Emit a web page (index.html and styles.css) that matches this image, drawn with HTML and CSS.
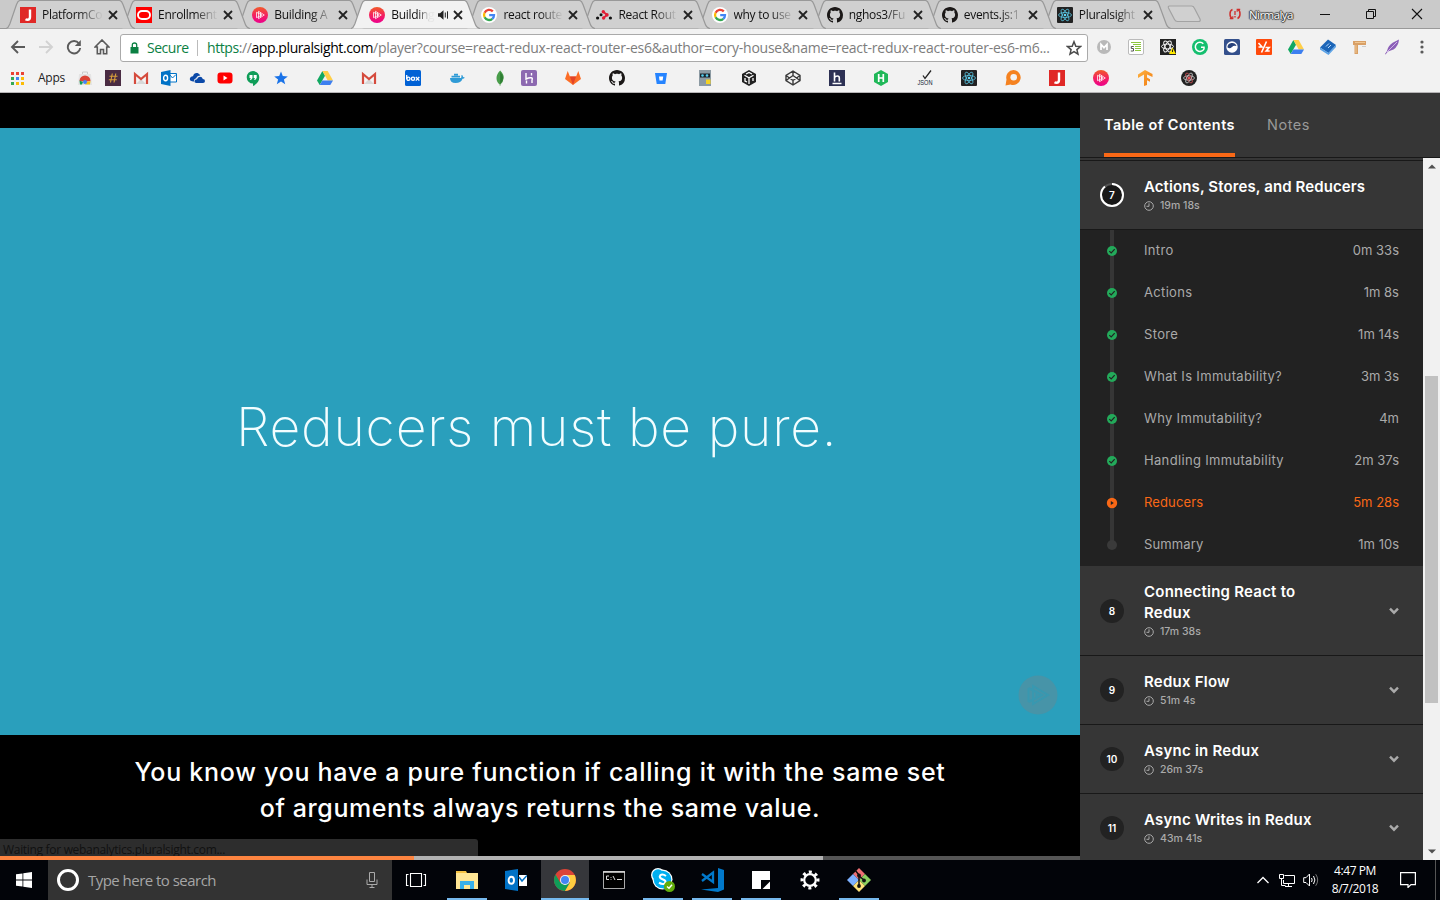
FILE: index.html
```html
<!DOCTYPE html>
<html lang="en">
<head>
<meta charset="utf-8">
<title>Building Applications with React and Redux</title>
<link rel="stylesheet" href="styles.css">
</head>
<body>
<svg class="defs" aria-hidden="true">
  <defs>
    <linearGradient id="pinkGrad" x1="0" y1="0" x2="0" y2="1"><stop offset="0" stop-color="#f15b2a"/><stop offset=".5" stop-color="#f4235f"/><stop offset="1" stop-color="#ec008c"/></linearGradient>
    <linearGradient id="tfGrad" x1="0" y1="0" x2="1" y2="1"><stop offset="0" stop-color="#ffb340"/><stop offset="1" stop-color="#f07a10"/></linearGradient>
    <symbol id="tabshape" viewBox="0 0 129 29"><path d="M0 28.5C2.500 28 3 26 4 23.500L10.500 4.500Q12 .5 14 .5H113.500Q115.500 .5 117 4.500L124 23.500Q125.500 28 129 28.500" stroke="#999" stroke-width="1.200"/></symbol>
    <symbol id="close" viewBox="0 0 10 10"><path d="M1 1L9 9M9 1L1 9" stroke="#222" stroke-width="1.800" fill="none"/></symbol>
    <symbol id="jred" viewBox="0 0 16 16"><path fill="#e02826" d="M0 0h16v16H0z"/><path d="M10 2.500v7.500q0 2.700-2.600 2.700-1 0-1.900-.5" fill="none" stroke="#fff" stroke-width="2.400"/></symbol>
    <symbol id="oracle" viewBox="0 0 16 16"><path fill="#f00" d="M0 0h16v16H0z"/><rect x="2" y="4" width="12" height="8" rx="4" fill="none" stroke="#fff" stroke-width="1.900"/></symbol>
    <symbol id="plural" viewBox="0 0 16 16"><circle cx="8" cy="8" r="8" fill="url(#pinkGrad)"/><path d="M6.500 4.300v7.400L12.300 8zM4.500 5.300v5.400M4.500 5.300L10 8l-5.500 2.700M8.500 5.500v5" fill="none" stroke="#fff" stroke-width=".9" opacity=".85"/></symbol>
    <symbol id="google" viewBox="0 0 16 16"><circle cx="8" cy="8" r="8" fill="#fff"/><g fill="none" stroke-width="2.300"><path d="M11.800 4.400A5 5 0 0 0 3.600 5.700" stroke="#ea4335"/><path d="M3.600 5.700A5 5 0 0 0 3.600 10.300" stroke="#fbbc05"/><path d="M3.600 10.300A5 5 0 0 0 11.300 11.800" stroke="#34a853"/><path d="M11.300 11.800Q13 10.300 13 8.200H8.200" stroke="#4285f4"/></g></symbol>
    <symbol id="rrouter" viewBox="0 0 16 16"><g fill="#111"><circle cx="1.600" cy="11" r="1.600"/><circle cx="5" cy="7.800" r="1.500"/><circle cx="14.400" cy="11" r="1.600"/></g><g fill="#e11d34"><circle cx="7.300" cy="4.800" r="1.700"/><circle cx="10.900" cy="7.900" r="1.800"/><circle cx="7.600" cy="11" r="1.700"/></g><path d="M7.300 4.800l3.600 3.100-3.300 3.100" fill="none" stroke="#e11d34" stroke-width="1.800"/></symbol>
    <symbol id="github" viewBox="0 0 16 16"><path fill="#1b1817" d="M8 0C3.580 0 0 3.580 0 8c0 3.540 2.290 6.530 5.470 7.590.4.070.55-.17.55-.38 0-.19-.010-.82-.010-1.490-2.010.37-2.530-.49-2.690-.94-.09-.23-.48-.94-.82-1.130-.28-.15-.68-.52-.010-.53.63-.010 1.080.58 1.230.82.72 1.210 1.870.87 2.330.66.070-.52.28-.87.51-1.070-1.780-.2-3.640-.89-3.640-3.950 0-.87.31-1.590.82-2.150-.080-.2-.36-1.020.080-2.120 0 0 .67-.21 2.200.82.64-.18 1.320-.27 2-.27s1.360.09 2 .27c1.530-1.040 2.200-.82 2.200-.82.44 1.100.16 1.920.080 2.120.51.56.82 1.270.82 2.150 0 3.070-1.870 3.750-3.650 3.950.29.25.54.73.54 1.480 0 1.070-.010 1.930-.010 2.200 0 .21.15.46.55.38A8.010 8.010 0 0 0 16 8c0-4.420-3.580-8-8-8z"/></symbol>
    <symbol id="react" viewBox="0 0 16 16"><rect width="16" height="16" rx="1" fill="#222"/><g fill="none" stroke="#5ed3f3" stroke-width=".7"><ellipse cx="8" cy="8" rx="6.500" ry="2.500"/><ellipse cx="8" cy="8" rx="6.500" ry="2.500" transform="rotate(60 8 8)"/><ellipse cx="8" cy="8" rx="6.500" ry="2.500" transform="rotate(120 8 8)"/></g><circle cx="8" cy="8" r="1.300" fill="#5ed3f3"/></symbol>
    <symbol id="gmail" viewBox="0 0 16 16"><path fill="#f4f4f4" d="M1 3h14v11H1z"/><path fill="#d8d8d8" d="M3 14l5-5 5 5z"/><path d="M2 14V4l6 5 6-5v10" fill="none" stroke="#d54b3d" stroke-width="2.200"/></symbol>
    <symbol id="gdrive" viewBox="0 0 16 16"><path fill="#11a861" d="M5.400 1L0 10.400 2.700 15 8 5.700z"/><path fill="#ffcf48" d="M5.400 1h5.300L16 10.400h-5.300z"/><path fill="#3d7ff0" d="M5.400 10.400H16L13.300 15H2.700z"/></symbol>
    <symbol id="outlook" viewBox="0 0 16 16"><path fill="#fff" stroke="#0072c6" d="M8 3.500h7.500v8.500H8z"/><path d="M9 5l2.500 3L15 4.500" fill="none" stroke="#0072c6"/><path fill="#0072c6" d="M0 2l9.500-2v16L0 14z"/><ellipse cx="4.600" cy="8" rx="2" ry="2.700" fill="none" stroke="#fff" stroke-width="1.400"/></symbol>
    <symbol id="clock" viewBox="0 0 10 10"><circle cx="5" cy="5" r="4.300" fill="none" stroke="#aaa"/><path d="M5 2.300V5.300H2.500" fill="none" stroke="#aaa"/></symbol>
    <symbol id="chev" viewBox="0 0 10 8"><path d="M1 1.700L5 5.700L9 1.700" fill="none" stroke="#aaa" stroke-width="2.400"/></symbol>
    <symbol id="done" viewBox="0 0 10 10"><circle cx="5" cy="5" r="5" fill="#23aa5a"/><path d="M2.300 5.100l1.900 1.800 3.500-3.700" fill="none" stroke="#222" stroke-width="1.200"/></symbol>
  </defs>
</svg>

<header class="tabstrip">
  <div class="tabs">
    <div class="tab first"><svg class="shape"><use href="#tabshape"/></svg><svg class="fav"><use href="#jred"/></svg><span class="label">PlatformCo</span><svg class="x"><use href="#close"/></svg></div>
    <div class="tab"><svg class="shape"><use href="#tabshape"/></svg><svg class="fav"><use href="#oracle"/></svg><span class="label">Enrollment</span><svg class="x"><use href="#close"/></svg></div>
    <div class="tab third"><svg class="shape"><use href="#tabshape"/></svg><svg class="fav"><use href="#plural"/></svg><span class="label">Building A</span><svg class="x"><use href="#close"/></svg></div>
    <div class="tab active"><svg class="shape"><use href="#tabshape"/></svg><svg class="fav"><use href="#plural"/></svg><span class="label">Building</span><svg class="audio" viewBox="0 0 12 10"><path fill="#222" d="M0 3.200h2L5.500.3v9.400L2 6.800H0z"/><path d="M7.300 2.500v5M9.500 1.300v7.400" stroke="#222" fill="none"/></svg><svg class="x"><use href="#close"/></svg></div>
    <div class="tab"><svg class="shape"><use href="#tabshape"/></svg><svg class="fav"><use href="#google"/></svg><span class="label">react route</span><svg class="x"><use href="#close"/></svg></div>
    <div class="tab"><svg class="shape"><use href="#tabshape"/></svg><svg class="fav"><use href="#rrouter"/></svg><span class="label">React Rout</span><svg class="x"><use href="#close"/></svg></div>
    <div class="tab"><svg class="shape"><use href="#tabshape"/></svg><svg class="fav"><use href="#google"/></svg><span class="label">why to use</span><svg class="x"><use href="#close"/></svg></div>
    <div class="tab"><svg class="shape"><use href="#tabshape"/></svg><svg class="fav"><use href="#github"/></svg><span class="label">nghos3/Fu</span><svg class="x"><use href="#close"/></svg></div>
    <div class="tab"><svg class="shape"><use href="#tabshape"/></svg><svg class="fav"><use href="#github"/></svg><span class="label">events.js:1</span><svg class="x"><use href="#close"/></svg></div>
    <div class="tab"><svg class="shape"><use href="#tabshape"/></svg><svg class="fav"><use href="#react"/></svg><span class="label">Pluralsight</span><svg class="x"><use href="#close"/></svg></div>
  </div>
  <svg class="newtab" viewBox="0 0 36 18"><path d="M2.500 1H24.500Q26.500 1 27.300 3L33 14Q34 16.500 31.500 16.500H10.500Q8.500 16.500 7.500 14.500L1.500 3Q.8 1 2.500 1z" fill="#d0d0d0" stroke="#a3a3a3" stroke-width="1.200"/></svg>
  <svg class="sync" viewBox="0 0 12 12"><g fill="none" stroke="#cf2f2c" stroke-width="1.500"><path d="M3.500 1.500Q1 2.500 1 6t2 4.500M8.500 10.500Q11 9.500 11 6T9 1.500"/><path d="M.8 10.700h3V8.300M11.200 1.300h-3v2.400" stroke-width="1.200"/><path d="M6 3v4M6 8v1.500" stroke-width="1.300"/></g></svg>
  <span class="profile">Nirmalya</span>
  <svg class="winbtn" viewBox="0 0 12 12"><path d="M1 6.500h10" stroke="#111"/></svg>
  <svg class="winbtn" viewBox="0 0 12 12"><path d="M1.500 3.500h7v7h-7zM3.500 3.500v-2h7v7h-2" fill="none" stroke="#111"/></svg>
  <svg class="winbtn" viewBox="0 0 12 12"><path d="M1 1l10 10M11 1L1 11" stroke="#111" stroke-width="1.100"/></svg>
</header>

<div class="toolbar">
  <div class="nav">
    <svg viewBox="0 0 16 16"><path d="M15 8H2M8 2L2 8l6 6" fill="none" stroke="#5a5a5a" stroke-width="1.900"/></svg>
    <svg viewBox="0 0 16 16"><path d="M1 8h13M8 2l6 6-6 6" fill="none" stroke="#d2d2d2" stroke-width="1.900"/></svg>
    <svg viewBox="0 0 16 16"><path d="M13 4.500A6.200 6.200 0 1 0 14.200 9" fill="none" stroke="#5a5a5a" stroke-width="1.900"/><path fill="#5a5a5a" d="M14.800 1v6h-6z"/></svg>
    <svg viewBox="0 0 16 16"><path d="M3.300 8v6.800h3.200v-4.300h3v4.300h3.200V8h2.200L8 1 1.100 8z" fill="none" stroke="#5a5a5a" stroke-width="1.600"/></svg>
  </div>
  <div class="omnibox">
    <svg class="lock" viewBox="0 0 9 12"><path fill="#0b8043" d="M.5 5h8v6.500h-8z"/><path d="M2.300 5V3q0-2 2.200-2t2.200 2v2" fill="none" stroke="#0b8043" stroke-width="1.300"/></svg>
    <span class="secure">Secure</span>
    <span class="sep"></span>
    <span class="url"><span class="host"><span class="green">https</span><span class="grey">://</span>app.pluralsight.com</span><span class="grey path">/player?course=react-redux-react-router-es6&amp;author=cory-house&amp;name=react-redux-react-router-es6-m6...</span></span>
    <svg class="star" viewBox="0 0 16 16"><path d="M8 1.700l1.800 4.500 4.700.3-3.600 3.100 1.100 4.600L8 11.700l-4 2.500 1.100-4.600L1.500 6.500l4.700-.3z" fill="none" stroke="#4a4a4a" stroke-width="1.500"/></svg>
  </div>
  <div class="exts">
    <svg viewBox="0 0 16 16"><circle cx="8" cy="8" r="7" fill="#b9b9b9"/><path d="M5 11V5.500l3 3.200 3-3.200V11" fill="none" stroke="#fff" stroke-width="1.700"/></svg>
    <svg viewBox="0 0 16 16"><rect x=".5" y=".5" width="15" height="15" rx="1.500" fill="#fff" stroke="#bbb"/><path d="M3 3.500h10M5 5.500h8M7 7.500h6M7 9.500h6M7 11.500h6" stroke="#8dc63f" stroke-width="1.100"/><path d="M5.800 7.500H3.300v2h2.200v2.500H2.800" fill="none" stroke="#555"/></svg>
    <svg viewBox="0 0 16 16"><path fill="#222" d="M0 0h16v16H0z"/><g fill="none" stroke="#eee"><ellipse cx="7.500" cy="7.500" rx="6" ry="2.400"/><ellipse cx="7.500" cy="7.500" rx="6" ry="2.400" transform="rotate(60 7.500 7.500)"/><ellipse cx="7.500" cy="7.500" rx="6" ry="2.400" transform="rotate(120 7.500 7.500)"/></g><path fill="#ffe900" d="M12.500 8.500L16 15H9z"/><path d="M12.500 10.500v2.500" stroke="#222"/></svg>
    <svg viewBox="0 0 16 16"><circle cx="8" cy="8" r="8" fill="#15bf6f"/><path d="M11.300 4.700A4.600 4.600 0 1 0 12 10V8.300H9" fill="none" stroke="#fff" stroke-width="1.500"/></svg>
    <svg viewBox="0 0 16 16"><rect width="16" height="16" rx="1.500" fill="#34508c"/><circle cx="8" cy="8" r="5.700" fill="#fff"/><path d="M3.400 8.300q2.300 1.800 4.300 0 2-2 4.800-1.200A4.700 4.700 0 0 0 3.400 8.300z" fill="#28427c"/></svg>
    <svg viewBox="0 0 16 16"><rect width="16" height="16" rx="1" fill="#ff4a0b"/><path d="M10.500 2.500L5.500 13.500M2.500 4L6 8H2.500M9.500 8.500h3.700l-3 3.500h3.500" fill="none" stroke="#fff" stroke-width="1.600"/></svg>
    <svg><use href="#gdrive"/></svg>
    <svg viewBox="0 0 16 16"><path fill="#1c65b8" d="M8 .5l8 5.500L8.500 14 0 8.500z"/><path fill="#5aa2e6" d="M0 8.500l8.500 5.500L16 6v2l-7.500 8L0 10.500z"/><path d="M6 7.500l3-3M8 9l3-3" stroke="#b8dafa"/></svg>
    <svg viewBox="0 0 16 16"><path fill="#d9a066" d="M1 2h13v4H6v9H2.500V6H1z"/><path d="M3 3.500h10M4 6v8" stroke="#f0c894"/><path d="M10 7.500h4" stroke="#ccc"/></svg>
    <svg viewBox="0 0 16 16"><path fill="#8c5fb8" d="M15 .5Q14.500 7 9.500 10.500L4 12.500 1.500 15.500 1 15l2-3q1-5.500 6-8.500z"/><path d="M3 13L13 3" stroke="#cdb2e6"/></svg>
  </div>
  <svg class="menu" viewBox="0 0 4 14"><g fill="#5a5a5a"><circle cx="2" cy="2" r="1.600"/><circle cx="2" cy="7" r="1.600"/><circle cx="2" cy="12" r="1.600"/></g></svg>
</div>

<div class="bookmarks">
  <svg class="appsgrid" viewBox="0 0 13 13"><g fill="#ea4335"><path d="M0 0h3v3H0zM5 0h3v3H5zM10 0h3v3h-3z"/></g><path fill="#34a853" d="M0 5h3v3H0zM0 10h3v3H0z"/><path fill="#4285f4" d="M5 5h3v3H5z"/><path fill="#fbbc05" d="M10 5h3v3h-3zM5 10h3v3H5zM10 10h3v3h-3z"/></svg>
  <span class="appslabel">Apps</span>
  <div class="bm tight">
    <svg viewBox="0 0 16 16"><path fill="#e4e4e4" d="M2 4h12l1 11H1z"/><path d="M5.500 4V2h5v2" fill="none" stroke="#ccc"/><path fill="#db4437" d="M2.500 11A5.500 5.500 0 0 1 13.500 11L10 11.500H6z"/><path fill="#0f9d58" d="M2.500 10.500L6 12l-1 2.500H3z"/><path fill="#f4c20d" d="M13.500 11l-3.500 1-2 2.500h5z"/><circle cx="8" cy="12" r="2" fill="#4285f4"/></svg>
    <svg viewBox="0 0 16 16"><path fill="#4a2c43" d="M0 0h16v16H0z"/><path d="M7.300 3.500L5.500 12.500M10.800 3.500L9 12.500M4.500 6.300h8M3.800 9.700h8" stroke="#d9a13b" stroke-width="1.100"/></svg>
    <svg><use href="#gmail"/></svg>
    <svg><use href="#outlook"/></svg>
    <svg viewBox="0 0 16 16"><path fill="#0b49a8" d="M4 11.500Q0 11 1 8q1-2 3-1.800Q5 2.500 8.500 3q2 .5 2.800 2.500-3.300 0-4 2.800Q4.500 9 5 11.500z"/><path fill="#0b49a8" d="M7 13Q5 12.500 5.500 10.800 6 9.300 8 9.300 8.500 6.700 11 6.700q2.200 0 2.800 2.300Q16 9 16 11t-2 2z"/></svg>
    <svg viewBox="0 0 16 16"><rect x=".5" y="2.500" width="15" height="11" rx="3" fill="#f00"/><path fill="#fff" d="M6.500 5.500v5L10.500 8z"/></svg>
    <svg viewBox="0 0 16 16"><path fill="#0f9d58" d="M8 1a6.300 6.300 0 0 0 0 12.600V16q6.300-3 6.300-8.700Q14 1.500 8 1z"/><path fill="#fff" d="M4.500 5h3v3L6 10H5l.7-2H4.500zM8.700 5h3v3l-1.500 2h-1l.7-2H8.700z"/></svg>
    <svg viewBox="0 0 16 16"><path fill="#1a73e8" d="M8 1.500l1.800 4.600 5 .3-3.900 3.100 1.300 4.800L8 11.600l-4.200 2.700 1.300-4.800L1.200 6.400l5-.3z"/></svg>
  </div>
  <div class="bm wide">
    <svg><use href="#gdrive"/></svg>
    <svg><use href="#gmail"/></svg>
    <svg viewBox="0 0 16 16"><rect width="16" height="16" rx="1.500" fill="#0061d5"/><g fill="none" stroke="#fff" stroke-width="1.300"><path d="M1.700 5v4"/><circle cx="3.400" cy="8.800" r="1.600"/><circle cx="8" cy="8.800" r="1.600"/><path d="M10.800 7l3.500 3.600M14.300 7l-3.500 3.600"/></g></svg>
    <svg viewBox="0 0 16 16"><path fill="#2f9bd6" d="M1 8h11q.8-1 .3-2.500l.7-.5q1 .7 1 2 1 0 1.800.4-.5 1.300-2.300 1.300-1.500 4.300-7 4.300Q1 13 1 8z"/><path fill="#2f9bd6" d="M2.500 5.800h8.500v1.700H2.500zM5 3.700h4v1.700H5z"/></svg>
  </div>
  <div class="bm mid">
    <svg viewBox="0 0 16 16"><path fill="#499d4a" d="M8.200.5q4 4 3.500 7.500-.3 4-3.300 6.500v1.300h-.7v-1.300Q4.500 12 4.500 8q0-4 3.700-7.500z"/><path fill="#2f7d33" d="M8.200 2v12q3-3 3-6t-3-6z"/></svg>
    <svg viewBox="0 0 16 16"><rect width="16" height="16" rx="2" fill="#8c69b0"/><path d="M5 3v6q3-1.500 5-1.300t1 2.300v3M5.500 10.500v3M10.500 3v2.500" fill="none" stroke="#fff" stroke-width="1.400"/></svg>
  </div>
  <div class="bm wide">
    <svg viewBox="0 0 16 16"><path fill="#fc6d26" d="M0 9l2.700-8 2.200 5.500h6.200L13.300 1 16 9l-8 6z"/><path fill="#e24329" d="M4.900 6.500h6.200L8 15z"/></svg>
    <svg><use href="#github"/></svg>
    <svg viewBox="0 0 16 16"><path fill="#2684ff" d="M2 3h12l-1.700 11H3.700z"/><path fill="#fff" d="M6 6.500h4.200l-.6 4H6.500z"/></svg>
    <svg viewBox="0 0 16 16"><path fill="#8c9aa3" d="M2 0h12v16H2z"/><path fill="#18222b" d="M3 3.500h10v4H3z"/><circle cx="5.500" cy="5.500" r="1.300" fill="#55d0f0"/><circle cx="10" cy="5.500" r="1.300" fill="#55d0f0"/><path fill="#f4d224" d="M9 9.500h4.500V14H9z"/></svg>
    <svg viewBox="0 0 16 16"><path fill="#222" d="M8 0l7 4v8l-7 4-7-4V4z"/><path d="M3.500 5.300L8 7.800l4.500-2.500M8 8v6M4 8v3l2 1M12 8v3M5 4l3-1.500L11 4" fill="none" stroke="#fff" stroke-width="1.300"/></svg>
    <svg viewBox="0 0 16 16"><path d="M8 1l7 4.500v5L8 15l-7-4.500v-5zM8 1v4.500M8 15v-4.500M1 5.500l7 5 7-5M1 10.500l7-5 7 5" fill="none" stroke="#3a3a3a" stroke-width="1.400"/></svg>
    <svg viewBox="0 0 16 16"><path fill="#2d3154" d="M0 0h16v16H0z"/><path d="M5.500 2.500v9M5.500 7.500q1-1.500 3-1.500 1.800 0 1.800 2v3.500M3.500 13.500h9" fill="none" stroke="#fff" stroke-width="1.600"/></svg>
    <svg viewBox="0 0 16 16"><path fill="#1fb858" d="M8 0l7 4v8l-7 4-7-4V4z"/><path d="M5.700 4v8M10.300 4v8M5.700 8h4.600" stroke="#fff" stroke-width="1.700"/></svg>
    <svg viewBox="0 0 16 16" class="jsonmark"><path d="M6 5.500l2 3L14 .5" fill="none" stroke="#222" stroke-width="1.300"/><text x=".5" y="15.300" class="json" textLength="15" lengthAdjust="spacingAndGlyphs">JSON</text></svg>
    <svg><use href="#react"/></svg>
    <svg viewBox="0 0 16 16"><path fill="#f58220" d="M8.500 0a7.500 7.500 0 1 1-3 14.500L.5 15.500l1-6A7.500 7.500 0 0 1 8.500 0z"/><circle cx="8.700" cy="7.300" r="3.300" fill="#f2f2f2"/></svg>
    <svg><use href="#jred"/></svg>
    <svg><use href="#plural"/></svg>
    <svg viewBox="0 0 16 16"><path fill="url(#tfGrad)" d="M8 0l7.500 4v3L10 4.500v3l3 1.700v2.600l-3-1.500V15l-3 1V4.500L1 8V4.500z"/></svg>
    <svg viewBox="0 0 16 16"><circle cx="8" cy="8" r="8" fill="#222"/><g fill="none" stroke="#ddd" stroke-width=".7"><ellipse cx="8" cy="8" rx="5.500" ry="2.200"/><ellipse cx="8" cy="8" rx="5.500" ry="2.200" transform="rotate(60 8 8)" stroke="#e8555a"/><ellipse cx="8" cy="8" rx="5.500" ry="2.200" transform="rotate(120 8 8)"/></g><circle cx="8" cy="8" r="1.500" fill="#e8555a"/></svg>
  </div>
</div>

<main class="player">
  <section class="stage">
    <div class="slide">
      <h1>Reducers must be pure.</h1>
      <svg class="playmark" viewBox="0 0 40 40"><circle cx="20" cy="20" r="19.500" fill="#4794a8"/><path d="M15 11v18l15-9zM10.500 13v14M10.500 13L24 20l-13.500 7M18.500 15.500v9" fill="none" stroke="#3898b0" stroke-width="2"/></svg>
    </div>
    <p class="caption"><span>You know you have a pure function if calling it with the same set</span><br><span class="second">of arguments always returns the same value.</span></p>
    <div class="progress"><i class="played"></i><i class="buffered"></i></div>
    <div class="status">Waiting for webanalytics.pluralsight.com...</div>
  </section>
  <aside class="side">
    <nav class="sidetabs"><a class="on">Table of Contents</a><a>Notes</a></nav>
    <div class="scroll">
      <div class="list">
        <div class="module open">
          <svg class="ring" viewBox="0 0 24 24"><circle cx="12" cy="12" r="11" fill="#181818" stroke="#555" stroke-width="2"/><circle cx="12" cy="12" r="11" fill="none" stroke="#fff" stroke-width="2" stroke-dasharray="61 70" transform="rotate(-90 12 12)"/><text x="12" y="15.700" text-anchor="middle">7</text></svg>
          <div class="info"><h2>Actions, Stores, and Reducers</h2><p><svg><use href="#clock"/></svg>19m 18s</p></div>
        </div>
        <ul class="clips">
          <li><svg><use href="#done"/></svg><span>Intro</span><b>0m 33s</b></li>
          <li><svg><use href="#done"/></svg><span>Actions</span><b>1m 8s</b></li>
          <li><svg><use href="#done"/></svg><span>Store</span><b>1m 14s</b></li>
          <li><svg><use href="#done"/></svg><span>What Is Immutability?</span><b>3m 3s</b></li>
          <li><svg><use href="#done"/></svg><span>Why Immutability?</span><b>4m</b></li>
          <li><svg><use href="#done"/></svg><span>Handling Immutability</span><b>2m 37s</b></li>
          <li class="now"><svg viewBox="0 0 10 10"><circle cx="5" cy="5" r="5.200" fill="#f96816"/><path fill="#222" d="M3.800 3v4l3-2z"/></svg><span>Reducers</span><b>5m 28s</b></li>
          <li class="last"><svg viewBox="0 0 10 10"><circle cx="5" cy="5" r="5" fill="#3a3a3a"/></svg><span>Summary</span><b>1m 10s</b></li>
        </ul>
        <div class="module tall"><span class="num">8</span><div class="info"><h2>Connecting React to<br>Redux</h2><p><svg><use href="#clock"/></svg>17m 38s</p></div><svg class="chev"><use href="#chev"/></svg></div>
        <div class="module"><span class="num">9</span><div class="info"><h2>Redux Flow</h2><p><svg><use href="#clock"/></svg>51m 4s</p></div><svg class="chev"><use href="#chev"/></svg></div>
        <div class="module"><span class="num">10</span><div class="info"><h2>Async in Redux</h2><p><svg><use href="#clock"/></svg>26m 37s</p></div><svg class="chev"><use href="#chev"/></svg></div>
        <div class="module"><span class="num">11</span><div class="info"><h2>Async Writes in Redux</h2><p><svg><use href="#clock"/></svg>43m 41s</p></div><svg class="chev"><use href="#chev"/></svg></div>
      </div>
      <div class="scrollbar"><svg viewBox="0 0 8 5"><path fill="#505050" d="M0 4.500L4 .5l4 4z"/></svg><i></i><svg viewBox="0 0 8 5"><path fill="#505050" d="M0 .5h8l-4 4z"/></svg></div>
    </div>
  </aside>
</main>

<footer class="taskbar">
  <div class="start"><svg viewBox="0 0 16 16"><path fill="#fff" d="M0 2.300l6.500-.9v6.200H0zM7.300 1.200L16 0v7.600H7.300zM0 8.400h6.500v6.200L0 13.700zM7.300 8.400H16V16l-8.700-1.200z"/></svg></div>
  <div class="search"><i class="cortana"></i><span class="ph">Type here to search</span><svg viewBox="0 0 12 18"><path d="M3.500 1.500h5v9h-5zM1 8.500v5h10v-5M6 13.500v3M3.500 16.500h5" fill="none" stroke="#aaa"/></svg></div>
  <div class="cell view"><svg viewBox="0 0 22 16"><path d="M5.500 1.500h11v13h-11zM3.500 2.500h-2v11h2M18.500 2.500h2v11h-2" fill="none" stroke="#fff" stroke-width="1.100"/></svg></div>
  <div class="cells">
    <div class="cell run"><svg class="folder" viewBox="0 0 22 22"><path fill="#f5c242" d="M0 2h10l1 2H0z"/><path fill="#ffe694" d="M0 4h22v16H0z"/><path fill="#39b0ea" d="M4 12h14v8h-4v-4H8v4H4z"/></svg></div>
    <div class="cell"><svg class="mail" viewBox="0 0 22 22"><path fill="#0072c6" d="M0 2l13-2v22L0 20z"/><path fill="#fff" d="M14 6h8v11h-8z"/><path d="M14 8l3 4 5-5.500" fill="none" stroke="#0072c6" stroke-width="1.500"/><ellipse cx="6.300" cy="11.300" rx="2.700" ry="3.500" fill="none" stroke="#fff" stroke-width="1.900"/></svg></div>
    <div class="cell run focus"><svg class="chrome" viewBox="0 0 22 22"><circle cx="11" cy="11" r="11" fill="#db4437"/><path fill="#0f9d58" d="M1.500 5.500A11 11 0 0 0 11 22l5-8.500H6.200z"/><path fill="#ffcd40" d="M11 22A11 11 0 0 0 20.700 6H11l5 7.500z"/><circle cx="11" cy="11" r="5" fill="#f1f1f1"/><circle cx="11" cy="11" r="4" fill="#4285f4"/></svg></div>
    <div class="cell"><svg class="cmd" viewBox="0 0 22 22"><path fill="#000" stroke="#aaa" d="M.5 2.500h21v17H.5z"/><path d="M0 3h22" stroke="#ddd" stroke-width="1.500"/><path d="M6 7H3.500v3.500H6M8 8v.8M8 10v.8M10 7l2 4M14 10.500h5" fill="none" stroke="#ddd"/></svg></div>
    <div class="cell run"><svg viewBox="0 0 24 24"><g fill="#fff"><circle cx="7" cy="7" r="7"/><circle cx="11.500" cy="11.500" r="10"/></g><g fill="#00aff0"><circle cx="7" cy="7" r="5.700"/><circle cx="11.500" cy="11.500" r="8.800"/><circle cx="16" cy="17" r="5"/></g><path d="M15 8Q11.500 5.500 9.300 7.300 7.500 9.800 11.500 11.200 16 12.800 13.800 15.300 11.500 17 8 14.700" fill="none" stroke="#fff" stroke-width="2.100"/><circle cx="18.500" cy="18.500" r="5.500" fill="#62ad0b"/><path d="M16 18.500l2 1.700 3-3.500" fill="none" stroke="#fff" stroke-width="1.400"/></svg></div>
    <div class="cell run"><svg viewBox="0 0 24 24"><path fill="#0179cb" d="M18 0l6 2v19.500L18 24 1 21.500 18 20z"/><path d="M2 6l11 8V4.500L2 13" fill="none" stroke="#0179cb" stroke-width="2.300"/></svg></div>
    <div class="cell run"><svg class="sticky" viewBox="0 0 22 22"><path fill="#fff" d="M2 2h18v9h-9v9H2z"/><path fill="#fff" d="M20 12.500V20h-7.500z"/></svg></div>
    <div class="cell"><svg class="gear" viewBox="0 0 22 22"><circle cx="11" cy="11" r="8" fill="none" stroke="#fff" stroke-width="3" stroke-dasharray="2.900 3.383" transform="rotate(-10 11 11)"/><circle cx="11" cy="11" r="5.800" fill="none" stroke="#fff" stroke-width="2.200"/></svg></div>
    <div class="cell run"><svg viewBox="0 0 24 24"><path fill="#ee6f73" d="M12 0l6 6-6 6-6-6z"/><path fill="#7db0ff" d="M6 6l6 6-6 6-6-6z"/><path fill="#8cd05f" d="M18 6l6 6-6 6-6-6z"/><path fill="#ffe27a" d="M12 12l6 6-6 6-6-6z"/><path d="M8 2l4 5v12M12 8l5 4" stroke="#111" stroke-width="1.500" fill="none"/><g fill="#111"><circle cx="12" cy="7.500" r="1.900"/><circle cx="17" cy="12.500" r="1.900"/><circle cx="12" cy="18" r="1.900"/></g></svg></div>
  </div>
  <div class="tray">
    <svg class="up" viewBox="0 0 12 8"><path d="M.5 7L6 1.500 11.500 7" fill="none" stroke="#fff" stroke-width="1.300"/></svg>
    <svg class="net" viewBox="0 0 16 13"><path d="M5.500 1.500h10v8h-11V6M.5.5h4v4h-4zM2.500 5v6.500h4M9.500 9.500v3M6 12.500h7" fill="none" stroke="#fff"/></svg>
    <svg class="vol" viewBox="0 0 16 14"><path d="M.7 4.700H3L6.500 1v12L3 9.500H.7z" fill="none" stroke="#fff"/><path d="M8.500 5q1.300 2 0 4M10.500 3q2.800 4 0 8" fill="none" stroke="#fff"/><path d="M12.700 1.200q4 5.800 0 11.600" fill="none" stroke="#777"/></svg>
    <div class="time">4:47 PM<br>8/7/2018</div>
    <svg class="note" viewBox="0 0 16 16"><path d="M.6.6h14.800v12h-4.400l-3 2.900v-2.900H.6z" fill="none" stroke="#fff" stroke-width="1.200"/></svg>
    <i class="peek"></i>
  </div>
</footer>
</body>
</html>
```
FILE: styles.css
```css
* { box-sizing: border-box; }
body { margin: 0; width: 1440px; height: 900px; overflow: hidden; display: flex; flex-direction: column; background: #000; font-family: "Open Sans", "Noto Sans", sans-serif; font-size: 12px; color: #222; }
svg { display: block; flex: none; }
.defs { position: absolute; width: 0; height: 0; }
h1, h2, p, ul { margin: 0; padding: 0; }

/* tab strip */
.tabstrip { height: 29px; background: #cacaca; display: flex; align-items: center; padding-left: 6px; border-bottom: 1px solid #999; flex: none; }
.tabs { display: flex; height: 29px; align-self: flex-start; isolation: isolate; }
.tab { position: relative; width: 115.1px; height: 29px; padding-left: 15px; display: flex; align-items: center; }
.tab.first { padding-left: 14px; }
.tab.third { padding-left: 16px; }
.tab:nth-child(1) { z-index: 10; }
.tab:nth-child(2) { z-index: 9; }
.tab:nth-child(3) { z-index: 8; }
.tab:nth-child(5) { z-index: 6; }
.tab:nth-child(6) { z-index: 5; }
.tab:nth-child(7) { z-index: 4; }
.tab:nth-child(8) { z-index: 3; }
.tab:nth-child(9) { z-index: 2; }
.tab:nth-child(10) { z-index: 1; }
.tab.active { z-index: 20; padding-left: 18px; }
.shape { position: absolute; left: 0; top: 0; width: 129px; height: 29px; fill: #d0d0d0; }
.active .shape { fill: #f2f2f2; }
.fav, .tab .label { position: relative; }
.fav { width: 16px; height: 16px; margin-top: 1px; }
.tab .label { width: 61px; margin-left: 6px; white-space: nowrap; line-height: 18px; letter-spacing: -.3px; color: #111; -webkit-mask-image: linear-gradient(90deg, #000 60%, rgba(0,0,0,.08) 95%); mask-image: linear-gradient(90deg, #000 60%, rgba(0,0,0,.08) 95%); }
.tab.active .label { width: 44px; -webkit-mask-image: linear-gradient(90deg, #000 60%, rgba(0,0,0,.05) 88%); mask-image: linear-gradient(90deg, #000 60%, rgba(0,0,0,.05) 88%); }
.audio { position: relative; width: 12px; height: 10px; margin-left: 3px; }
.tab .x { position: absolute; left: 101.600px; top: 10px; width: 10px; height: 10px; }
.newtab { width: 36px; height: 18px; margin-left: 10px; }
.sync { width: 12px; height: 12px; margin-left: 26px; }
.profile { width: 44px; margin-left: 8px; font-size: 11.500px; letter-spacing: -.550px; color: #fff; text-shadow: 0 0 1px #333, 1px 0 1px #444, -1px 0 1px #444, 0 1px 1px #444, 0 -1px 1px #444; white-space: nowrap; }
.winbtn { width: 12px; height: 12px; margin-left: 34px; }
.profile + .winbtn { margin-left: 26px; }

/* toolbar */
.toolbar { height: 33px; background: #f2f2f2; display: flex; align-items: center; flex: none; padding: 3px 0 0 10px; }
.nav { display: flex; gap: 12px; width: 110px; }
.nav svg { width: 16px; height: 16px; }
.omnibox { width: 968px; height: 28px; margin-top: 2px; border: 1px solid #aaa; border-radius: 3px; background: #fff; display: flex; align-items: center; padding-left: 9px; font-size: 14px; line-height: 18px; padding-bottom: 1px; white-space: nowrap; }
.lock { width: 9px; height: 12px; margin-right: 8px; }
.secure { color: #0b8043; width: 42px; letter-spacing: -.480px; }
.sep { width: 1px; height: 16px; background: #bbb; margin: 0 9px 0 8px; }
.url { width: 859px; color: #000; }
.host { letter-spacing: -.415px; }
.path { letter-spacing: -.255px; }
.grey { color: #7d7d7d; }
.green { color: #0b8043; }
.star { width: 16px; height: 16px; }
.exts { display: flex; gap: 16px; margin-left: 8px; }
.exts svg, .bm svg { width: 16px; height: 16px; }
.menu { width: 4px; height: 14px; margin-left: 20px; }

/* bookmarks bar */
.bookmarks { height: 31px; flex: none; background: #f2f2f2; border-bottom: 1px solid #b6b4b6; display: flex; align-items: center; padding: 2px 0 0 11px; }
.appsgrid { width: 13px; height: 13px; }
.appslabel { margin-left: 14px; width: 39px; letter-spacing: -.250px; line-height: 16px; }
.bm { display: flex; }
.tight { gap: 12px; }
.wide { gap: 28px; margin-left: 28px; }
.mid { gap: 13px; margin-left: 27px; }
.jsonmark { overflow: visible; }
.json { font: 6.500px "Liberation Sans", sans-serif; fill: #123; }

/* player */
.player { height: 767px; flex: none; display: flex; font-family: Inter, "Open Sans", sans-serif; }
.stage { position: relative; width: 1080px; background: #000; padding-top: 35px; display: flex; flex-direction: column; }
.slide { position: relative; height: 607px; background: #2a9fbc; flex: none; }
.slide h1 { font-size: 53.500px; font-weight: 220; letter-spacing: .750px; color: #f2fdff; line-height: 66px; padding: 266px 0 0 236px; white-space: nowrap; }
.playmark { position: absolute; right: 22px; bottom: 20px; width: 40px; height: 40px; }
.caption { color: #fff; font-size: 25px; font-weight: 500; letter-spacing: .720px; line-height: 36px; text-align: center; padding-top: 19px; white-space: nowrap; }
.second { letter-spacing: .570px; }
.progress { margin-top: auto; height: 4px; background: #555; display: flex; position: relative; z-index: 1; }
.played { width: 414px; background: #fd8440; }
.buffered { width: 409px; background: #b2b2b2; }
.status { position: absolute; left: 0; bottom: 0; width: 478px; height: 21px; background: #2d2d2d; border-top-right-radius: 3px; padding-left: 3px; font: 12px/21px "Open Sans", sans-serif; letter-spacing: -.310px; color: #111; }

/* sidebar */
.side { width: 360px; background: #363636; display: flex; flex-direction: column; }
.sidetabs { height: 65px; border-bottom: 1px solid #181818; display: flex; gap: 32px; padding-left: 24px; font-size: 14.500px; flex: none; }
.sidetabs a { color: #999; line-height: 64px; height: 64px; letter-spacing: .550px; }
.sidetabs .on { color: #fff; font-weight: 600; letter-spacing: .420px; border-bottom: 4px solid #f96816; width: 131px; white-space: nowrap; }
.scroll { height: 702px; display: flex; overflow: hidden; }
.list { width: 343px; padding-top: 2px; }
.module { height: 69px; border-bottom: 1px solid #181818; display: flex; align-items: center; padding: 0 24px 0 20px; color: #fff; }
.module.open { height: 70px; border-top: 1px solid #181818; }
.module.tall { height: 90px; }
.ring, .num { width: 24px; height: 24px; flex: none; }
.ring text { font: 600 10px Inter, sans-serif; fill: #fff; }
.num { border-radius: 50%; background: #222; font-size: 10px; font-weight: 600; line-height: 24px; text-align: center; }
.info { margin-left: 20px; flex: 1; }
.info h2 { font-size: 15px; font-weight: 600; line-height: 21px; letter-spacing: .230px; white-space: nowrap; margin: -1px 0 1px; }
.open .info h2 { letter-spacing: .100px; }
.info p { display: flex; align-items: center; gap: 6px; font-size: 10.500px; font-weight: 500; line-height: 16px; color: #aaa; }
.info p svg { width: 10px; height: 10px; }
.chev { width: 10px; height: 8px; }
.clips { list-style: none; background: #222; }
.clips li { position: relative; height: 42px; display: flex; align-items: center; padding: 0 24px 0 27px; font-size: 13px; color: #aaa; }
.clips li::before { content: ""; position: absolute; left: 30px; top: 0; width: 4px; height: 42px; background: #363636; }
.clips .last::before { height: 21px; }
.clips svg { position: relative; width: 10px; height: 10px; overflow: visible; margin-right: 27px; }
.clips span { letter-spacing: .330px; padding-bottom: 2px; }
.clips .now span, .clips .last span { letter-spacing: .120px; }
.clips b { font-weight: 400; margin-left: auto; padding-bottom: 2px; }
.clips .now { color: #f96816; }
.scrollbar { width: 17px; background: #f1f1f1; display: flex; flex-direction: column; align-items: center; padding: 6px 0; }
.scrollbar svg { width: 8px; height: 5px; }
.scrollbar i { width: 13px; height: 327px; margin: 207px 0 auto; background: #c1c1c1; }

/* taskbar */
.taskbar { height: 40px; flex: none; background: #020409; display: flex; }
.start { width: 48px; display: flex; align-items: center; justify-content: center; }
.start svg { width: 16px; height: 16px; }
.search { width: 344px; background: #333; display: flex; align-items: center; padding: 0 14px 0 9px; }
.cortana { width: 22px; height: 22px; border: 3px solid #fff; border-radius: 50%; }
.ph { margin-left: 9px; font-size: 15px; letter-spacing: -.530px; color: #a6a6a6; white-space: nowrap; }
.search svg { width: 12px; height: 18px; margin-left: auto; }
.cell { width: 48px; height: 40px; display: flex; align-items: center; justify-content: center; }
.view svg { width: 22px; height: 16px; }
.cells { display: flex; gap: 1px; margin-left: 3px; }
.cells svg { width: 24px; height: 24px; }
.cells .chrome, .cells .cmd, .cells .folder, .cells .mail, .cells .sticky, .cells .gear { width: 22px; height: 22px; }
.cells .run { background: linear-gradient(#76b9ed, #76b9ed) center bottom / 40px 2px no-repeat; }
.cells .focus { background: linear-gradient(#76b9ed, #76b9ed) center bottom / 48px 2px no-repeat, #36373b; }
.tray { margin-left: auto; display: flex; align-items: center; color: #fff; }
.up { width: 12px; height: 8px; }
.net { width: 16px; height: 13px; margin-left: 10px; }
.vol { width: 16px; height: 14px; margin-left: 8px; }
.time { width: 72px; text-align: center; line-height: 18px; letter-spacing: -.420px; }
.note { width: 16px; height: 16px; margin-left: 9px; }
.peek { width: 1px; height: 40px; background: #555; margin: 0 4px 0 19px; }
```
